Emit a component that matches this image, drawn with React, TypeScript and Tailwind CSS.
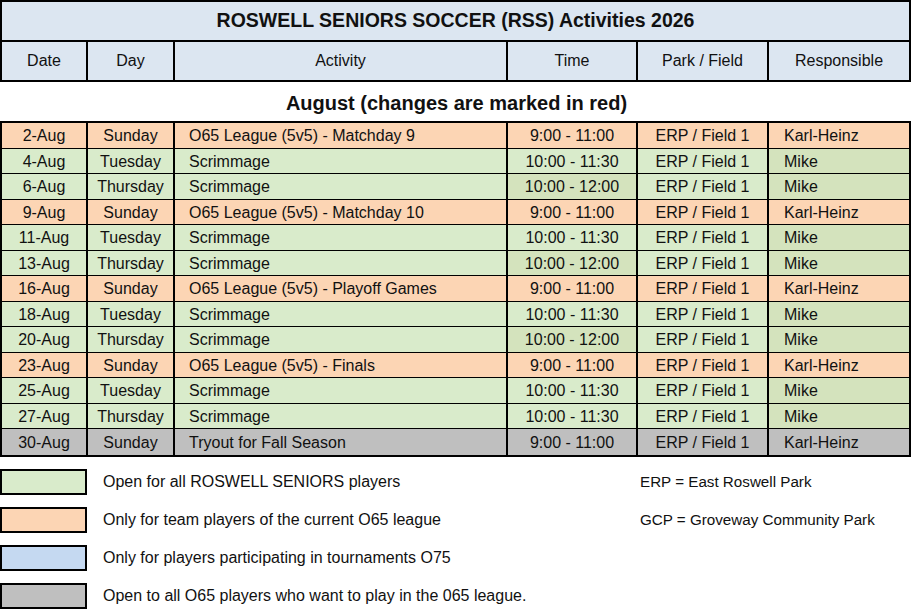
type Kind = "green" | "orange" | "gray";

type Activity = {
  date: string;
  day: string;
  activity: string;
  time: string;
  field: string;
  who: string;
  kind: Kind;
};

const rows: Activity[] = [
  { date: "2-Aug", day: "Sunday", activity: "O65 League (5v5) - Matchday 9", time: "9:00 - 11:00", field: "ERP / Field 1", who: "Karl-Heinz", kind: "orange" },
  { date: "4-Aug", day: "Tuesday", activity: "Scrimmage", time: "10:00 - 11:30", field: "ERP / Field 1", who: "Mike", kind: "green" },
  { date: "6-Aug", day: "Thursday", activity: "Scrimmage", time: "10:00 - 12:00", field: "ERP / Field 1", who: "Mike", kind: "green" },
  { date: "9-Aug", day: "Sunday", activity: "O65 League (5v5) - Matchday 10", time: "9:00 - 11:00", field: "ERP / Field 1", who: "Karl-Heinz", kind: "orange" },
  { date: "11-Aug", day: "Tuesday", activity: "Scrimmage", time: "10:00 - 11:30", field: "ERP / Field 1", who: "Mike", kind: "green" },
  { date: "13-Aug", day: "Thursday", activity: "Scrimmage", time: "10:00 - 12:00", field: "ERP / Field 1", who: "Mike", kind: "green" },
  { date: "16-Aug", day: "Sunday", activity: "O65 League (5v5) - Playoff Games", time: "9:00 - 11:00", field: "ERP / Field 1", who: "Karl-Heinz", kind: "orange" },
  { date: "18-Aug", day: "Tuesday", activity: "Scrimmage", time: "10:00 - 11:30", field: "ERP / Field 1", who: "Mike", kind: "green" },
  { date: "20-Aug", day: "Thursday", activity: "Scrimmage", time: "10:00 - 12:00", field: "ERP / Field 1", who: "Mike", kind: "green" },
  { date: "23-Aug", day: "Sunday", activity: "O65 League (5v5) - Finals", time: "9:00 - 11:00", field: "ERP / Field 1", who: "Karl-Heinz", kind: "orange" },
  { date: "25-Aug", day: "Tuesday", activity: "Scrimmage", time: "10:00 - 11:30", field: "ERP / Field 1", who: "Mike", kind: "green" },
  { date: "27-Aug", day: "Thursday", activity: "Scrimmage", time: "10:00 - 11:30", field: "ERP / Field 1", who: "Mike", kind: "green" },
  { date: "30-Aug", day: "Sunday", activity: "Tryout for Fall Season", time: "9:00 - 11:00", field: "ERP / Field 1", who: "Karl-Heinz", kind: "gray" },
];

const fills: Record<Kind, string> = {
  green: "bg-[#d9ebcb]",
  orange: "bg-[#fcd5b4]",
  gray: "bg-[#bfbfbf]",
};

// some green cells are filled a shade darker in the sheet
const darkFills: Record<Kind, string> = {
  green: "bg-[#d4e3bd]",
  orange: "bg-[#fcd5b4]",
  gray: "bg-[#bfbfbf]",
};

const cols = "grid grid-cols-[86px_87px_333px_130px_131px_1fr]";

const legend = [
  { fill: "bg-[#d9ebcb]", text: "Open for all ROSWELL SENIORS players", note: "ERP = East Roswell Park" },
  { fill: "bg-[#fcd5b4]", text: "Only for team players of the current O65 league", note: "GCP = Groveway Community Park" },
  { fill: "bg-[#c5d9f1]", text: "Only for players participating in tournaments O75", note: "" },
  { fill: "bg-[#bfbfbf]", text: "Open to all O65 players who want to play in the 065 league.", note: "" },
];

export default function App() {
  return (
    <div className="w-[913px] h-[609px] overflow-hidden bg-white font-['Liberation_Sans',Arial,sans-serif] text-[16px] text-[#111]">
      <div className="w-[911px]">
        {/* title + column headers */}
        <div className="border-2 border-black bg-[#dce6f1]">
          <div className="flex h-[40px] items-center justify-center border-b-2 border-black text-[19.5px] font-bold">
            ROSWELL SENIORS SOCCER (RSS) Activities 2026
          </div>
          <div className={`${cols} h-[38px] items-stretch`}>
            {["Date", "Day", "Activity", "Time", "Park / Field", "Responsible"].map((h, i) => (
              <div key={h} className={`flex items-center justify-center ${i < 5 ? "border-r-2 border-black" : ""}`}>
                {h}
              </div>
            ))}
          </div>
        </div>

        <div className="flex h-[39px] items-center justify-center pl-[2px] pt-[2px] text-[20px] font-bold">
          August (changes are marked in red)
        </div>

        {/* schedule */}
        <div className="border-2 border-black leading-[20px]">
          {rows.map((r, i) => (
            <div
              key={r.date}
              className={`${cols} ${i % 2 === 0 ? "h-[26px]" : "h-[25px]"} ${fills[r.kind]} ${
                i < rows.length - 1 ? "border-b border-black" : ""
              }`}
            >
              <div className="flex items-center justify-center border-r-2 border-black pt-[1px]">{r.date}</div>
              <div className="flex items-center justify-center border-r-2 border-black pt-[1px]">{r.day}</div>
              <div className="flex items-center border-r-2 border-black pl-[14px] pt-[1px]">{r.activity}</div>
              <div
                className={`flex items-center justify-center border-r-2 border-black pt-[1px] ${
                  r.time.endsWith("12:00") ? darkFills[r.kind] : ""
                }`}
              >
                {r.time}
              </div>
              <div className="flex items-center justify-center border-r-2 border-black pt-[1px]">{r.field}</div>
              <div className={`flex items-center pl-[15px] pt-[1px] ${darkFills[r.kind]}`}>{r.who}</div>
            </div>
          ))}
        </div>

        {/* legend */}
        <div className="mt-[12px] flex flex-col gap-[12px]">
          {legend.map((l) => (
            <div key={l.text} className="flex h-[26px] items-center">
              <div className={`h-[26px] w-[87px] border-2 border-black ${l.fill}`} />
              <div className="w-[553px] pl-[16px]">{l.text}</div>
              <div className="text-[15.2px]">{l.note}</div>
            </div>
          ))}
        </div>
      </div>
    </div>
  );
}
